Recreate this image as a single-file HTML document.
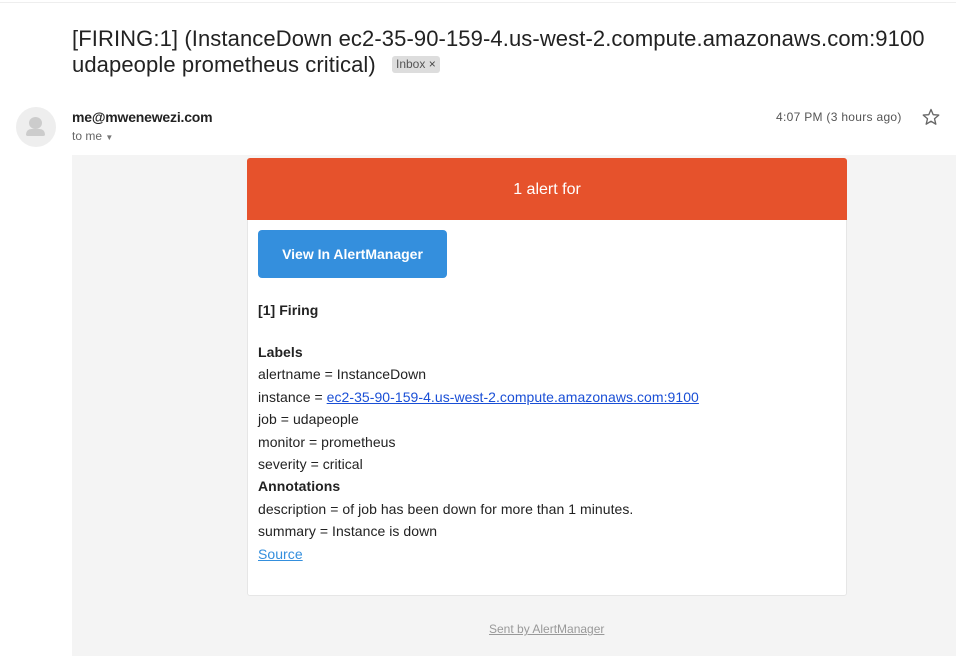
<!DOCTYPE html>
<html><head><style>
*{margin:0;padding:0;box-sizing:border-box}
body{width:956px;height:656px;overflow:hidden;background:#fff;font-family:"Liberation Sans",Arial,sans-serif;position:relative;color:#222}
.a{position:absolute;white-space:nowrap}
.t{font-size:22px;color:#222;left:72px;line-height:28px;letter-spacing:0.1px}
.l{font-size:14px;left:258px;color:#222;letter-spacing:0.05px}
a{color:#1a4fd6}
</style></head><body>
<div class="a" style="left:0;top:2px;width:956px;height:1px;background:#eee"></div>
<div class="a t" style="top:25px">[FIRING:1] (InstanceDown ec2-35-90-159-4.us-west-2.compute.amazonaws.com:9100</div>
<div class="a t" style="top:51px">udapeople prometheus critical)</div>
<div class="a" style="left:392px;top:56px;height:17px;padding:0 4px;background:#ddd;border-radius:3px;font-size:12px;line-height:17px;color:#555">Inbox <span style="color:#444">×</span></div>
<div class="a" style="left:16px;top:107px;width:40px;height:40px;border-radius:50%;background:#eee"></div>
<div class="a" style="left:29px;top:117px;width:13px;height:12px;border-radius:50%;background:#ccc"></div>
<div class="a" style="left:26px;top:129px;width:19px;height:7px;border-radius:6px 6px 2px 2px;background:#ccc"></div>
<div class="a" style="left:72px;top:109px;font-size:14px;font-weight:bold;color:#222;letter-spacing:-0.2px">me@mwenewezi.com</div>
<div class="a" style="left:72px;top:129px;font-size:12px;color:#666">to me <span style="font-size:8px;color:#777">▼</span></div>
<div class="a" style="left:776px;top:110px;font-size:12px;color:#555;letter-spacing:0.3px">4:07 PM (3 hours ago)</div>
<svg class="a" style="left:921px;top:107px" width="20" height="20" viewBox="0 0 24 24"><path d="M12 3l2.6 6.2 6.7.5-5.1 4.4 1.6 6.5L12 17.1 6.2 20.6l1.6-6.5L2.7 9.7l6.7-.5z" fill="none" stroke="#666" stroke-width="1.6" stroke-linejoin="round"/></svg>
<div class="a" style="left:72px;top:155px;width:884px;height:501px;background:#f4f4f4"></div>
<div class="a" style="left:247px;top:158px;width:600px;height:438px;background:#fff;border:1px solid #e6e6e6;border-radius:3px"></div>
<div class="a" style="left:247px;top:158px;width:600px;height:62px;background:#e6522c;border-radius:3px 3px 0 0;color:#fff;font-size:16px;text-align:center;line-height:63px">1 alert for</div>
<div class="a" style="left:258px;top:230px;width:189px;height:48px;background:#348fdd;border-radius:4px;color:#fff;font-size:14px;font-weight:bold;text-align:center;line-height:48px">View In AlertManager</div>
<div class="a l" style="top:302px;font-weight:bold">[1] Firing</div>
<div class="a l" style="top:344px;font-weight:bold">Labels</div>
<div class="a l" style="top:366px">alertname = InstanceDown</div>
<div class="a l" style="top:389px">instance = <a href="#">ec2-35-90-159-4.us-west-2.compute.amazonaws.com:9100</a></div>
<div class="a l" style="top:411px">job = udapeople</div>
<div class="a l" style="top:434px">monitor = prometheus</div>
<div class="a l" style="top:456px">severity = critical</div>
<div class="a l" style="top:478px;font-weight:bold">Annotations</div>
<div class="a l" style="top:501px">description = of job has been down for more than 1 minutes.</div>
<div class="a l" style="top:523px">summary = Instance is down</div>
<div class="a l" style="top:546px"><a href="#" style="color:#348fdd">Source</a></div>
<div class="a" style="left:489px;top:622px;font-size:12px;color:#999;text-decoration:underline">Sent by AlertManager</div>
</body></html>
